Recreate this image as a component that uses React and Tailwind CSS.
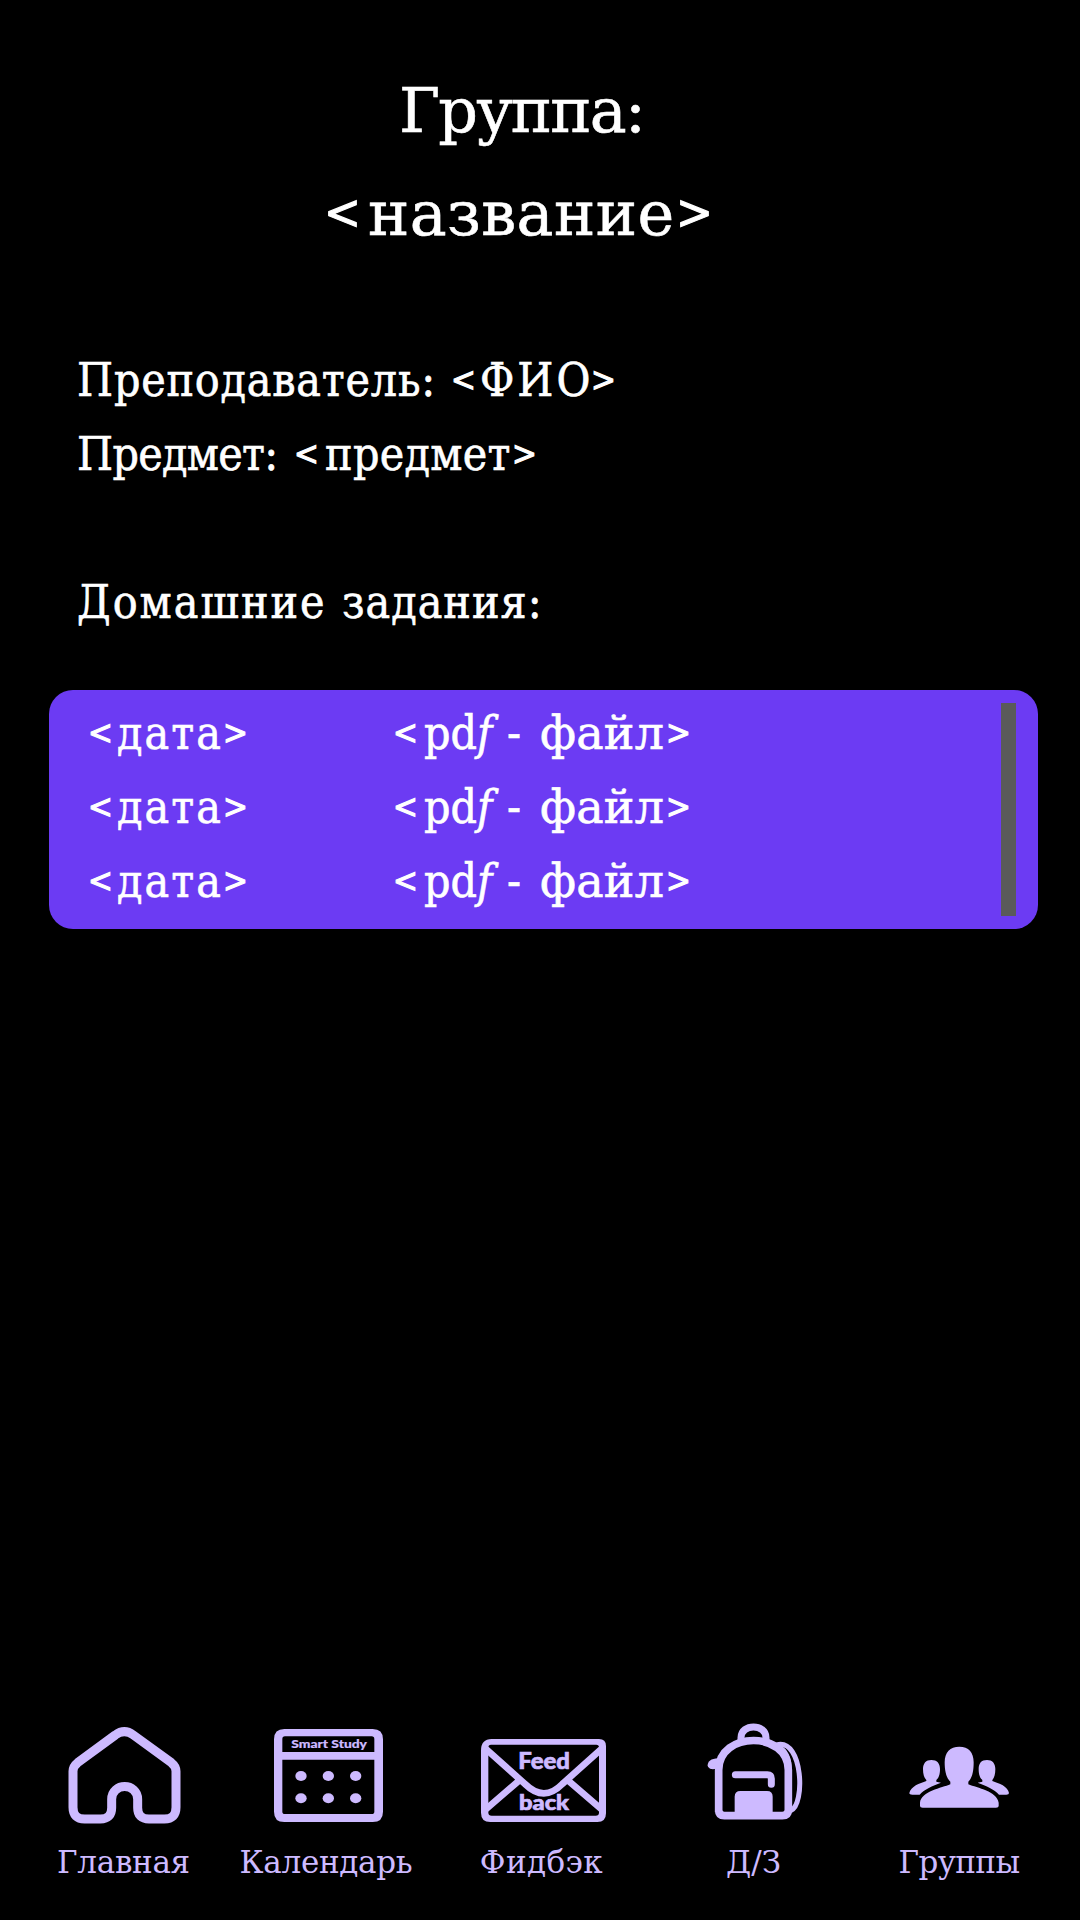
const homework = [1, 2, 3];

const bracket = "inline-block leading-none [-webkit-text-stroke:1.1px_currentColor]";
const bracketSm = "text-[33px] align-[5px]";
const bracketLg = "text-[49px] align-[6px]";

function Lt({ className }) {
  return <span className={`${bracket} ${className}`}>&lt;</span>;
}

function Gt({ className }) {
  return <span className={`${bracket} ${className}`}>&gt;</span>;
}

function Word({ className, children }) {
  return <span className={`inline-block ${className}`}>{children}</span>;
}

function HomeIcon() {
  return (
    <svg viewBox="0 0 450 360" className="h-[120px] w-[150px]" fill="none" stroke="#cdbaff" strokeWidth="27">
      <path d="M196 75Q223 55 250 75L364 158Q378 169 378 184V292Q378 327 343 327H297Q263 327 263 293V268C263 217 185 217 185 268V293Q185 327 151 327H104Q69 327 69 292V184Q69 169 83 158Z" />
    </svg>
  );
}

function CalendarIcon() {
  return (
    <svg viewBox="0 0 600 360" className="h-[120px] w-[200px]" fill="#cdbaff">
      <path fillRule="evenodd" d="M178 57H443Q474 57 474 88V305Q474 336 443 336H178Q147 336 147 305V88Q147 57 178 57ZM180 79Q172 79 172 87V126H448V87Q448 79 440 79ZM172 149V305Q172 312 180 312H440Q448 312 448 305V149Z" />
      {[198, 265].map((y) =>
        [228, 310, 392].map((x) => <ellipse key={`${x}-${y}`} cx={x} cy={y} rx="17" ry="15" />)
      )}
      <text x="199" y="113" textLength="227" lengthAdjust="spacingAndGlyphs" fontSize="31" fontWeight="900" fontFamily="Lato, sans-serif" stroke="#cdbaff" strokeWidth="0.5">Smart Study</text>
    </svg>
  );
}

function FeedbackIcon() {
  return (
    <svg viewBox="0 0 480 360" className="h-[120px] w-[160px]" fill="#cdbaff">
      <path fillRule="evenodd" d="M80 87H402Q423 87 423 108V310Q423 336 397 336H76Q48 336 48 308V122Q48 87 80 87ZM78 104Q70 104 70 112V308Q70 317 80 317H392Q402 317 402 308V112Q402 104 394 104Z" />
      <path d="M62 116L180 222Q237 278 292 222L410 116M60 300L169 206M412 300L303 206" fill="none" stroke="#cdbaff" strokeWidth="20" />
      <g fontWeight="900" fontFamily="Lato, sans-serif" stroke="#cdbaff" strokeWidth="2">
        <text x="160" y="177" textLength="155" lengthAdjust="spacingAndGlyphs" fontSize="68">Feed</text>
        <text x="162" y="300" textLength="150" lengthAdjust="spacingAndGlyphs" fontSize="62">back</text>
      </g>
    </svg>
  );
}

function BackpackIcon() {
  return (
    <svg viewBox="0 0 390 360" className="h-[120px] w-[130px]" fill="none" stroke="#cdbaff" strokeLinecap="round">
      <path d="M86 307V180C86 62 295 62 295 180V300Q295 317 277 317H103Q86 317 86 300Z" strokeWidth="23" strokeLinecap="butt" />
      <path d="M153 92V83C153 40 228 40 228 83V92" strokeWidth="21" strokeLinecap="butt" />
      <path d="M262 104C340 88 345 285 303 301" strokeWidth="15" />
      <path d="M268 106C296 122 303 150 303 180V300" strokeWidth="5" />
      <path d="M85 145C62 145 53 156 53 166C55 180 71 178 78 176L90 164Z" fill="#cdbaff" stroke="none" />
      <path d="M136 194H232Q244 194 244 206V223" strokeWidth="21" />
      <path d="M134 312V260Q134 243 151 243H231Q248 243 248 260V312Z" fill="#cdbaff" stroke="none" />
    </svg>
  );
}

function GroupIcon() {
  return (
    <svg viewBox="0 0 480 360" className="h-[120px] w-[160px]" fill="#cdbaff">
      <path d="M238 110C266 110 281 127 281 157C281 186 276 205 265 215V223C292 234 351 244 356 278V288Q356 293 348 293H128Q120 293 120 288V278C124 244 185 234 211 223V215C200 205 194 186 194 157C194 127 210 110 238 110Z" />
      <path d="M154 150C171 150 180 160 180 177C180 194 176 204 169 210V215L183 218C157 227 133 238 119 254H97Q88 254 88 249C92 229 119 220 139 213V210C132 203 129 192 129 177C129 160 138 150 154 150Z" />
      <path d="M321 150C304 150 296 160 296 177C296 194 300 204 307 210V215L293 218C319 227 343 238 357 254H379Q387 254 387 249C384 229 357 220 337 213V210C343 203 346 192 346 177C346 160 337 150 321 150Z" />
    </svg>
  );
}

const tabs = [
  { label: "Главная", Icon: HomeIcon, item: "w-[150px]", text: "tracking-[-0.3px] pr-[3px]" },
  { label: "Календарь", Icon: CalendarIcon, item: "ml-[25px] w-[200px]", text: "tracking-[-0.3px] pl-[2px]" },
  { label: "Фидбэк", Icon: FeedbackIcon, item: "ml-[40px] w-[160px]", text: "tracking-[0.4px] pr-[7px]" },
  { label: "Д/З", Icon: BackpackIcon, item: "ml-[65px] w-[130px]", text: "pr-[3px]" },
  { label: "Группы", Icon: GroupIcon, item: "ml-[60px] w-[160px]", text: "tracking-[-0.6px] pr-[2px]" },
];

export default function App() {
  return (
    <div className="flex h-[1920px] w-[1080px] flex-col overflow-hidden bg-black font-['DejaVu_Serif_Condensed','DejaVu_Serif',serif] text-white">
      <h1 className="h-[343px] shrink-0 pt-[59px] text-[62px] leading-[103px] whitespace-nowrap [-webkit-text-stroke:0.6px_currentColor]">
        <div className="h-[103px] pl-[399px] font-['DejaVu_Serif',serif] tracking-[-1.8px]">Группа:</div>
        <div className="h-[103px] pl-[324px]">
          <Lt className={`w-[44px] ${bracketLg}`} />
          <Word className="w-[308px] font-['DejaVu_Serif',serif] tracking-[0.4px]">название</Word>
          <Gt className={bracketLg} />
        </div>
      </h1>

      <section className="h-[347px] shrink-0 pl-[77px] text-[46px] leading-[74px] whitespace-nowrap [-webkit-text-stroke:0.6px_currentColor]">
        <div className="h-[74px]">
          <Word className="w-[374px] tracking-[0.8px]">Преподаватель:</Word>
          <Lt className={`w-[29px] ${bracketSm}`} />
          <Word className="w-[111px] tracking-[3px]">ФИО</Word>
          <Gt className={bracketSm} />
        </div>
        <div className="h-[74px]">
          <Word className="w-[217px] tracking-[-0.7px]">Предмет:</Word>
          <Lt className={`w-[31px] ${bracketSm}`} />
          <Word className="w-[187px] tracking-[0.3px]">предмет</Word>
          <Gt className={bracketSm} />
        </div>
        <div className="mt-[74px] h-[74px]">
          <Word className="w-[265px] tracking-[2px]">Домашние</Word>
          <Word className="tracking-[1px]">задания:</Word>
        </div>
      </section>

      <section className="ml-[49px] flex h-[239px] w-[989px] shrink-0 items-center justify-between rounded-[24px] bg-[#6c3bf3] pr-[22px] pl-[39px]">
        <div className="-mt-[5px] text-[46px] leading-[74px] whitespace-nowrap [-webkit-text-stroke:0.6px_currentColor]">
          {homework.map((id) => (
            <div key={id} className="h-[74px]">
              <Lt className={`w-[29px] ${bracketSm}`} />
              <Word className="w-[106px] tracking-[2.1px]">дата</Word>
              <Gt className={`w-[170px] ${bracketSm}`} />
              <Lt className={`w-[31px] ${bracketSm}`} />
              <Word className="w-[83px]">pd<i>f</i></Word>
              <Word className="w-[33px]">-</Word>
              <Word className="w-[126px] font-['DejaVu_Serif',serif] tracking-[0.2px]">файл</Word>
              <Gt className={bracketSm} />
            </div>
          ))}
        </div>
        <div className="h-[213px] w-[15px] bg-[#5a5a5a]" />
      </section>

      <nav className="mt-auto flex h-[210px] shrink-0 pl-[50px] font-['DejaVu_Serif',serif] text-[#cdbaff]">
        {tabs.map(({ label, Icon, item, text }) => (
          <div key={label} className={`flex flex-col items-center ${item}`}>
            <Icon />
            <span className={`mt-[7px] text-[31px] leading-[50px] whitespace-nowrap ${text}`}>{label}</span>
          </div>
        ))}
      </nav>
    </div>
  );
}
